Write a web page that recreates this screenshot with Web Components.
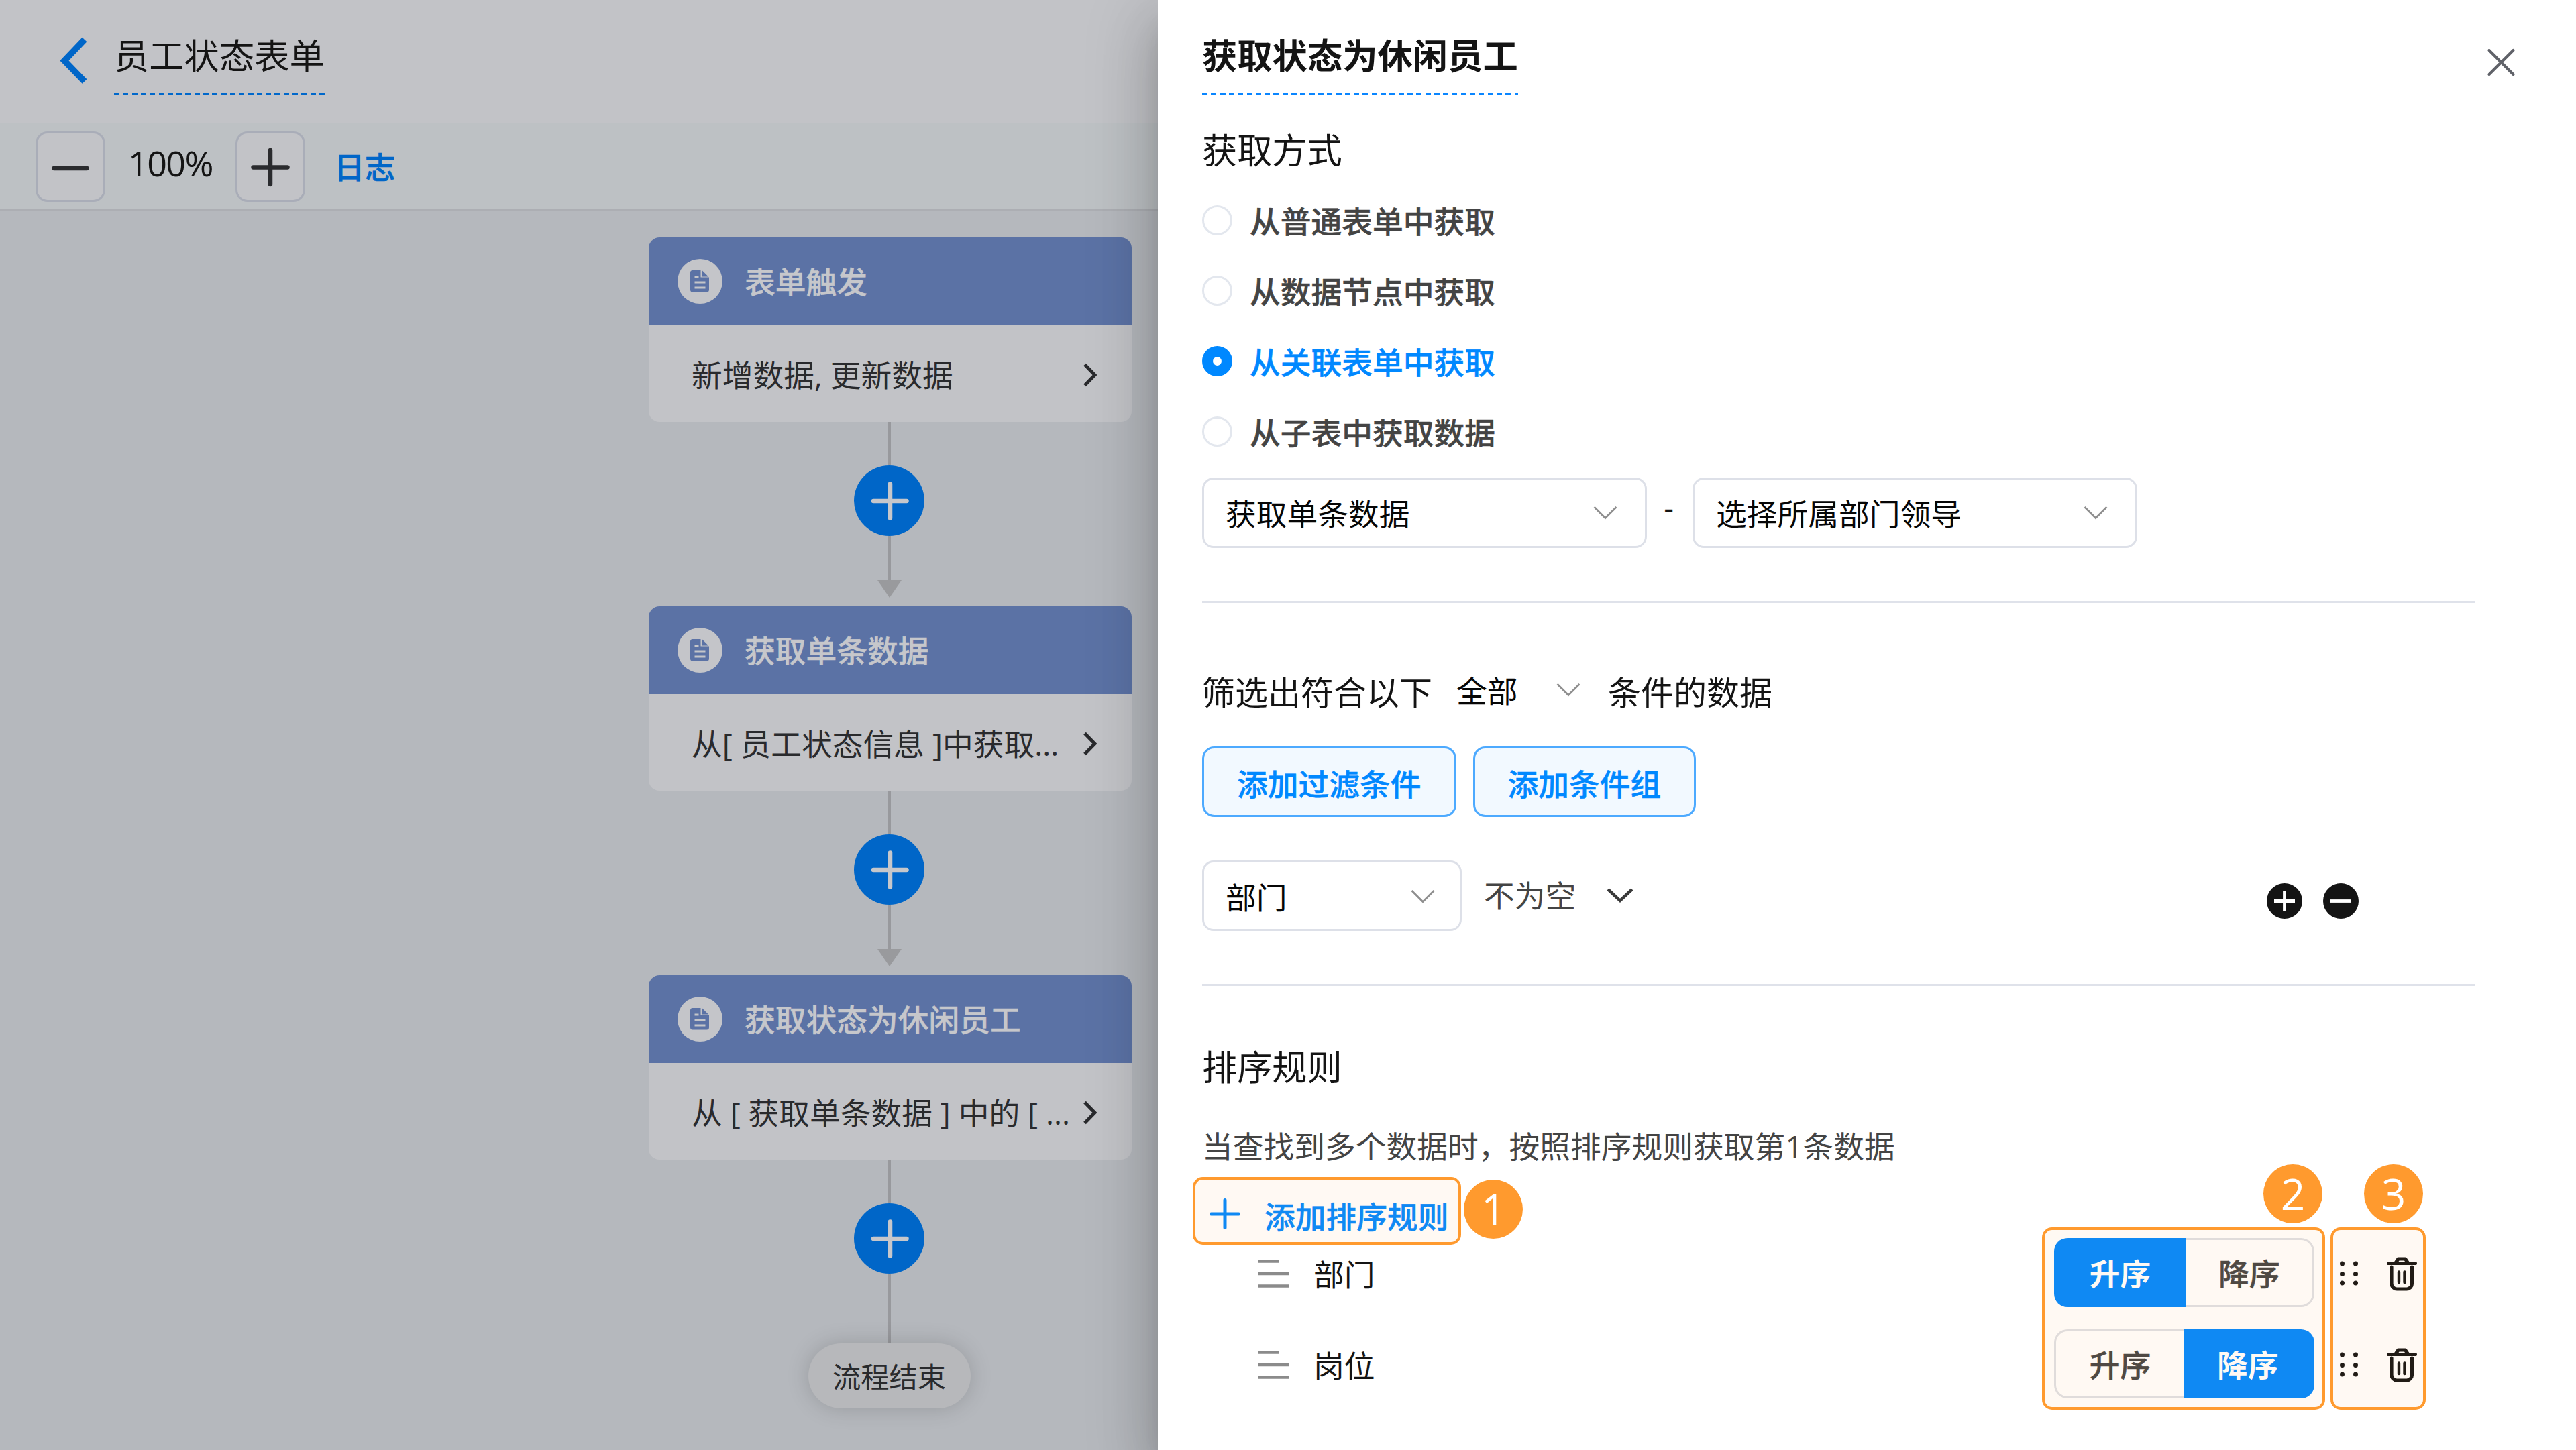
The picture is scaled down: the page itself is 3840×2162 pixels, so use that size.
<!DOCTYPE html>
<html lang="zh-CN">
<head>
<meta charset="UTF-8">
<title>员工状态表单</title>
<style>
    html, body {
        margin: 0;
        height: 100%;
    }

    body {
        font-family: "Open Sans", "Noto Sans CJK SC", sans-serif;
        font-size: 45.75px;
        line-height: 60px;
        color: #141414;
        overflow: hidden;
        background: #b5b8bd;
    }
</style>
</head>
<body>
<flow-app>
    <flow-canvas slot="canvas">
        <flow-node label="表单触发">新增数据, 更新数据</flow-node>
        <flow-link arrow></flow-link>
        <flow-node label="获取单条数据">从[ 员工状态信息 ]中获取...</flow-node>
        <flow-link arrow></flow-link>
        <flow-node label="获取状态为休闲员工">从 [ 获取单条数据 ] 中的 [ ...</flow-node>
        <flow-link></flow-link>
        <flow-end>流程结束</flow-end>
    </flow-canvas>
    <node-drawer slot="drawer" label="获取状态为休闲员工">
        <fetch-mode></fetch-mode>
        <filter-rules></filter-rules>
        <sort-rules></sort-rules>
    </node-drawer>
</flow-app>

<script>
class BaseElement extends HTMLElement {
    constructor() {
        super();
        this.attachShadow({ mode: 'open' });
    }

    connectedCallback() {
        this.shadowRoot.innerHTML = `
            <style>
                *, :host { box-sizing: border-box; }
                svg { display: block; flex: none; fill: none; }
                .medium { font-weight: 500; -webkit-text-stroke: .5px currentColor; }
            </style>
            ${ this.render() }
        `;
    }

    attr( name ) {
        return this.getAttribute( name ) || '';
    }
}

class FlowApp extends BaseElement {
    render() {
        return `
            <style>
                :host {
                    display: grid;
                    grid-template-columns: 1726px 1fr;
                    width: 3840px;
                    height: 2162px;
                    overflow: hidden;
                }
                .left {
                    display: flex;
                    flex-direction: column;
                    min-width: 0;
                }
            </style>
            <div class="left">
                <flow-header label="员工状态表单"></flow-header>
                <flow-toolbar></flow-toolbar>
                <slot name="canvas"></slot>
            </div>
            <slot name="drawer"></slot>
        `;
    }
}

// editable title with a dashed underline
class EditTitle extends BaseElement {
    render() {
        return `
            <style>
                :host {
                    display: inline-block;
                    padding-bottom: 23px;
                    font-size: 52.3px;
                    line-height: 65px;
                    white-space: nowrap;
                    background: repeating-linear-gradient(to right, var(--lineColor, #0a86ff) 0 8px, transparent 8px 13.3px) left bottom / 100% 4px no-repeat;
                }
            </style>
            <slot></slot>
        `;
    }
}

class FlowHeader extends BaseElement {
    render() {
        return `
            <style>
                :host {
                    display: flex;
                    align-items: flex-start;
                    height: 183px;
                    padding: 50px 0 0 86px;
                    background: #c2c3c7;
                }
                svg { margin: 5px 37px 0 0; }
                edit-title { --lineColor: #0068cb; padding-bottom: 27px; }
            </style>
            <svg width="47" height="70" viewBox="0 0 47 70" stroke="#0066c8" stroke-width="9.5"><path d="M40 4 10 35.5l30 31"/></svg>
            <edit-title>${ this.attr( 'label' ) }</edit-title>
        `;
    }
}

class FlowToolbar extends BaseElement {
    render() {
        return `
            <style>
                :host {
                    display: flex;
                    align-items: center;
                    height: 131px;
                    padding: 2px 0 0 53px;
                    background: #bdc1c4;
                    border-bottom: 2px solid #acaeb3;
                }
                .btn {
                    display: flex;
                    align-items: center;
                    justify-content: center;
                    width: 104px;
                    height: 105px;
                    border: 3px solid #a9adb8;
                    border-radius: 18px;
                    background: #c2c3c7;
                }
                .zoom {
                    width: 194px;
                    text-align: center;
                    font-size: 52px;
                    letter-spacing: -1.5px;
                    padding-bottom: 12px;
                }
                .log {
                    margin-left: 43px;
                    color: #0066c8;
                }
            </style>
            <div class="btn"><svg width="60" height="60" stroke="#2a2b2e" stroke-width="6.5" stroke-linecap="round"><path d="M5.500 32h49"/></svg></div>
            <div class="zoom">100%</div>
            <div class="btn"><svg width="60" height="60" stroke="#2a2b2e" stroke-width="6.5" stroke-linecap="round"><path d="M4.500 30.500h51M30 5v51"/></svg></div>
            <div class="log medium">日志</div>
        `;
    }
}

class FlowCanvas extends BaseElement {
    render() {
        return `
            <style>
                :host {
                    display: flex;
                    flex-direction: column;
                    align-items: center;
                    flex: 1;
                    width: 720px;
                    margin-left: 967px;
                    padding-top: 40px;
                }
            </style>
            <slot></slot>
        `;
    }
}

class FlowNode extends BaseElement {
    render() {
        return `
            <style>
                :host {
                    display: block;
                    flex: none;
                    width: 720px;
                    height: 275px;
                    border-radius: 16px;
                    overflow: hidden;
                    background: #c2c3c7;
                    white-space: nowrap;
                }
                .head {
                    display: flex;
                    align-items: center;
                    gap: 33px;
                    height: 131px;
                    padding-left: 43px;
                    background: #5b72a5;
                    color: #c6c7cb;
                }
                .body {
                    display: flex;
                    align-items: center;
                    justify-content: space-between;
                    height: 144px;
                    padding: 3px 50px 0 64px;
                    color: #292a2d;
                }
            </style>
            <div class="head">
                <svg width="67" height="67" viewBox="0 0 67 67">
                    <circle cx="33.500" cy="33.500" r="33.500" fill="#c4c5c9"/>
                    <path d="M22.500 17h12v10.500H47V46a3.500 3.500 0 0 1-3.500 3.500h-21A3.500 3.500 0 0 1 19 46V20.500a3.500 3.500 0 0 1 3.500-3.500z" fill="#5b72a5"/>
                    <path d="M37 17.500 46 26.500h-9z" fill="#5b72a5"/>
                    <path d="M25.500 27h6M25.500 35h16M25.500 43h16" stroke="#c4c5c9" stroke-width="3"/>
                </svg>
                <span class="medium">${ this.attr( 'label' ) }</span>
            </div>
            <div class="body">
                <span><slot></slot></span>
                <svg width="24" height="36" stroke="#292a2d" stroke-width="5"><path d="M4 2.500l15 15.500L4 33.500"/></svg>
            </div>
        `;
    }
}

// vertical line with an add button, optionally ending in an arrow
class FlowLink extends BaseElement {
    render() {
        const arrow = this.hasAttribute( 'arrow' );
        return `
            <style>
                :host {
                    display: flex;
                    flex-direction: column;
                    align-items: center;
                    flex: none;
                    height: ${ arrow ? 275 : 274 }px;
                    margin-right: 3px;
                }
                .line { width: 4px; height: 65px; background: #98999d; }
                .line.tail { height: ${ arrow ? 66 : 104 }px; }
                .arrow {
                    border: 18px solid transparent;
                    border-top: 26px solid #999a9d;
                    border-bottom: 0;
                }
            </style>
            <div class="line"></div>
            <svg width="105" height="105" viewBox="0 0 105 105" stroke="#c6c7cb" stroke-width="6.500" stroke-linecap="round">
                <circle cx="52.500" cy="52.500" r="52.500" fill="#0066c8" stroke="none"/>
                <path d="M29 53h49.500M54 27.500v51"/>
            </svg>
            <div class="line tail"></div>
            ${ arrow ? '<div class="arrow"></div>' : '' }
        `;
    }
}

class FlowEnd extends BaseElement {
    render() {
        return `
            <style>
                :host {
                    display: flex;
                    align-items: center;
                    justify-content: center;
                    flex: none;
                    width: 242px;
                    height: 97px;
                    padding-top: 3px;
                    margin-right: 3px;
                    border-radius: 49px;
                    background: #b7b8bb;
                    color: #292a2d;
                    font-size: 42.3px;
                    box-shadow: 0 0 33px rgba(0, 0, 0, .17);
                }
            </style>
            <slot></slot>
        `;
    }
}

class NodeDrawer extends BaseElement {
    render() {
        return `
            <style>
                :host {
                    position: relative;
                    display: block;
                    padding: 50px 150px 0 66px;
                    background: #fff;
                    box-shadow: 0 26px 33px -16px rgba(0, 0, 0, .2), 0 52px 78px 6px rgba(0, 0, 0, .14), 0 20px 98px 16px rgba(0, 0, 0, .12);
                }
                .top { display: flex; justify-content: space-between; height: 92px; margin-right: -60px; }
                edit-title { font-weight: 700; height: 92px; }
                svg { margin-top: 21px; }
            </style>
            <div class="top">
                <edit-title>${ this.attr( 'label' ) }</edit-title>
                <svg width="44" height="44" stroke="#606269" stroke-width="4.200" stroke-linecap="round"><path d="M4.500 4l36 36M40.500 4l-36 36"/></svg>
            </div>
            <slot></slot>
        `;
    }
}

class SectionTitle extends BaseElement {
    render() {
        return `
            <style>
                :host { display: block; font-size: 52.2px; line-height: 60px; }
            </style>
            <slot></slot>
        `;
    }
}

class RadioItem extends BaseElement {
    render() {
        return `
            <style>
                :host {
                    display: flex;
                    align-items: center;
                    gap: 26px;
                    height: 105px;
                    color: #444;
                }
                i {
                    width: 45px;
                    height: 45px;
                    border: 3px solid #e3e7ee;
                    border-radius: 50%;
                }
                span { padding-top: 2px; }
                :host([checked]) { color: #0088ff; }
                :host([checked]) i { border: 16px solid #0088ff; }
            </style>
            <i></i><span class="medium"><slot></slot></span>
        `;
    }
}

class SelectBox extends BaseElement {
    render() {
        return `
            <style>
                :host {
                    display: flex;
                    align-items: center;
                    justify-content: space-between;
                    width: 663px;
                    height: 105px;
                    padding: 2px 41px 0 32px;
                    border: 3px solid #dde0e8;
                    border-radius: 17px;
                    color: #060606;
                }
                :host([plain]) { border: 0; height: 66px; }
                svg { stroke: #8e8e8e; margin-bottom: 2px; }
            </style>
            <slot></slot>
            <svg width="36" height="22" stroke-width="2.800"><path d="M1.500 2l16.500 16.500L34.500 2"/></svg>
        `;
    }
}

class FetchMode extends BaseElement {
    render() {
        const modes = [ '从普通表单中获取', '从数据节点中获取', '从关联表单中获取', '从子表中获取数据' ];
        return `
            <style>
                :host { display: block; padding: 52px 0 79px; border-bottom: 3px solid #dfe2ea; }
                .modes { margin: 22px 0 16px; }
                .row { display: flex; align-items: center; }
                .row span { width: 68px; text-align: center; padding: 0 3px 17px 0; }
            </style>
            <section-title>获取方式</section-title>
            <div class="modes">
                ${ modes.map( ( item, i ) => `<radio-item ${ i === 2 ? 'checked' : '' }>${ item }</radio-item>` ).join( '' ) }
            </div>
            <div class="row">
                <select-box>获取单条数据</select-box>
                <span>-</span>
                <select-box>选择所属部门领导</select-box>
            </div>
        `;
    }
}

class GhostButton extends BaseElement {
    render() {
        return `
            <style>
                :host {
                    display: flex;
                    align-items: center;
                    height: 105px;
                    padding: 6px 49px 0;
                    border: 3px solid #4daaff;
                    border-radius: 18px;
                    background: #f2f9ff;
                    color: #0088ff;
                }
            </style>
            <span class="medium"><slot></slot></span>
        `;
    }
}

class FilterRules extends BaseElement {
    render() {
        return `
            <style>
                :host { display: block; padding: 100px 0 79px; border-bottom: 3px solid #dfe2ea; }
                div { display: flex; align-items: center; }
                .match { height: 66px; font-size: 49px; padding-bottom: 1px; }
                .match select-box { width: 230px; padding: 0 25px 4px 20px; margin: 0 16px; font-size: 45.75px; }
                .buttons { gap: 25px; margin-top: 48px; }
                .cond { margin-top: 65px; padding-right: 174px; }
                .cond select-box { width: 387px; padding: 4px 37px 0 32px; }
                .op { display: flex; align-items: center; gap: 46px; margin: 0 auto 2px 33px; color: #444; }
                .tools { gap: 31px; padding-top: 15px; }
            </style>
            <div class="match">
                <span>筛选出符合以下</span>
                <select-box plain>全部</select-box>
                <span>条件的数据</span>
            </div>
            <div class="buttons">
                <ghost-button>添加过滤条件</ghost-button>
                <ghost-button>添加条件组</ghost-button>
            </div>
            <div class="cond">
                <select-box>部门</select-box>
                <div class="op">
                    不为空
                    <svg width="40" height="24" stroke="#3a3a3a" stroke-width="4.500"><path d="M2 3l18 17L38 3"/></svg>
                </div>
                <div class="tools">
                    <svg width="53" height="53" stroke="#fff" stroke-width="4.800"><circle cx="26.500" cy="26.500" r="26.500" fill="#141414" stroke="none"/><path d="M11 26.500h31M26.500 11v31"/></svg>
                    <svg width="53" height="53" stroke="#fff" stroke-width="4.800"><circle cx="26.500" cy="26.500" r="26.500" fill="#141414" stroke="none"/><path d="M11 26.500h31"/></svg>
                </div>
            </div>
        `;
    }
}

class OrderToggle extends BaseElement {
    render() {
        const order = this.attr( 'value' );
        return `
            <style>
                :host { display: grid; grid-template-columns: ${ order === 'asc' ? '197px 191px' : '193px 195px' }; height: 103px; }
                span {
                    display: flex;
                    align-items: center;
                    justify-content: center;
                    border: 3px solid #dfe1e6;
                    color: #444;
                    padding-top: 3px;
                }
                .asc { border-radius: 20px 0 0 20px; border-right: 0; padding-left: 1px; }
                .desc { border-radius: 0 20px 20px 0; border-left: 0; }
                .on { background: #0088ff; border-color: #0088ff; color: #fff; font-weight: 700; -webkit-text-stroke: 0; }
                .asc.on { padding: 3px 3px 0 0; }
            </style>
            <span class="medium asc ${ order === 'asc' ? 'on' : '' }">升序</span>
            <span class="medium desc ${ order === 'desc' ? 'on' : '' }">降序</span>
        `;
    }
}

class SortItem extends BaseElement {
    render() {
        return `
            <style>
                :host {
                    display: flex;
                    align-items: center;
                    height: 103px;
                    padding: 0 87px 0 84px;
                }
                .name { margin: 4px auto 0 36px; }
                .drag { margin: 0 43px 0 38px; }
                .del { margin-top: 3px; }
            </style>
            <svg width="46" height="44" stroke="#8b8b8b" stroke-width="4.500"><path d="M0 4.500h30M0 23h46M0 41.500h46"/></svg>
            <div class="name"><slot></slot></div>
            <order-toggle value="${ this.attr( 'order' ) }"></order-toggle>
            <svg class="drag" width="27" height="38">
                <g fill="#141414">
                    <circle cx="3.500" cy="5" r="3.500"/><circle cx="23.500" cy="5" r="3.500"/>
                    <circle cx="3.500" cy="20.500" r="3.500"/><circle cx="23.500" cy="20.500" r="3.500"/>
                    <circle cx="3.500" cy="34" r="3.500"/><circle cx="23.500" cy="34" r="3.500"/>
                </g>
            </svg>
            <svg class="del" width="45" height="52" viewBox="0 0 45 52" stroke="#141414" stroke-width="5.200" stroke-linecap="round" stroke-linejoin="round">
                <path d="M2.600 10.500h39.800M13 10l4-6h10.500l4 6"/>
                <path d="M7 16v25a8 8 0 0 0 8 8h14.500a8 8 0 0 0 8-8V16"/>
                <path d="M18 23.500v15.500M26.500 23.500v15.500" stroke-width="4.400"/>
            </svg>
        `;
    }
}

class CallOut extends BaseElement {
    render() {
        return `
            <style>
                :host {
                    position: absolute;
                    border: 4px solid #ff9a2e;
                    border-radius: 15px;
                    background: rgba(255, 153, 43, .06);
                }
                span {
                    position: absolute;
                    left: var(--badgeX);
                    top: var(--badgeY);
                    width: 88px;
                    height: 88px;
                    border-radius: 50%;
                    background: #ff9a2e;
                    color: #fff;
                    font-size: 64px;
                    line-height: 88px;
                    text-align: center;
                }
            </style>
            <span><slot></slot></span>
        `;
    }
}

class SortRules extends BaseElement {
    render() {
        return `
            <style>
                :host { position: relative; display: block; padding-top: 91px; }
                .desc { margin-top: 58px; color: #444; }
                .add {
                    display: flex;
                    align-items: center;
                    gap: 36px;
                    height: 66px;
                    margin: 40px 0 1px 11px;
                    color: #0088ff;
                }
                .add span { padding-top: 3px; }
                .add svg { margin-bottom: 5px; }
                sort-item + sort-item { margin-top: 33px; }
                .c1 { left: -14px; top: 285px; width: 400px; height: 101px; --badgeX: 400px; --badgeY: 0px; }
                .c2 { left: 1252px; top: 360px; width: 422px; height: 272px; --badgeX: 326px; --badgeY: -98px; }
                .c3 { left: 1682px; top: 360px; width: 142px; height: 272px; --badgeX: 46px; --badgeY: -98px; }
            </style>
            <section-title>排序规则</section-title>
            <div class="desc">当查找到多个数据时，按照排序规则获取第1条数据</div>
            <div class="add">
                <svg width="46" height="46" stroke="#0088ff" stroke-width="5" stroke-linecap="round"><path d="M2.500 23h41M23 2.500v41"/></svg>
                <span class="medium">添加排序规则</span>
            </div>
            <sort-item order="asc">部门</sort-item>
            <sort-item order="desc">岗位</sort-item>
            <call-out class="c1">1</call-out>
            <call-out class="c2">2</call-out>
            <call-out class="c3">3</call-out>
        `;
    }
}

customElements.define("edit-title", EditTitle );
customElements.define("section-title", SectionTitle );
customElements.define("select-box", SelectBox );
customElements.define("radio-item", RadioItem );
customElements.define("ghost-button", GhostButton );
customElements.define("order-toggle", OrderToggle );
customElements.define("sort-item", SortItem );
customElements.define("call-out", CallOut );
customElements.define("flow-header", FlowHeader );
customElements.define("flow-toolbar", FlowToolbar );
customElements.define("flow-node", FlowNode );
customElements.define("flow-link", FlowLink );
customElements.define("flow-end", FlowEnd );
customElements.define("flow-canvas", FlowCanvas );
customElements.define("fetch-mode", FetchMode );
customElements.define("filter-rules", FilterRules );
customElements.define("sort-rules", SortRules );
customElements.define("node-drawer", NodeDrawer );
customElements.define("flow-app", FlowApp );
</script>
</body>
</html>
